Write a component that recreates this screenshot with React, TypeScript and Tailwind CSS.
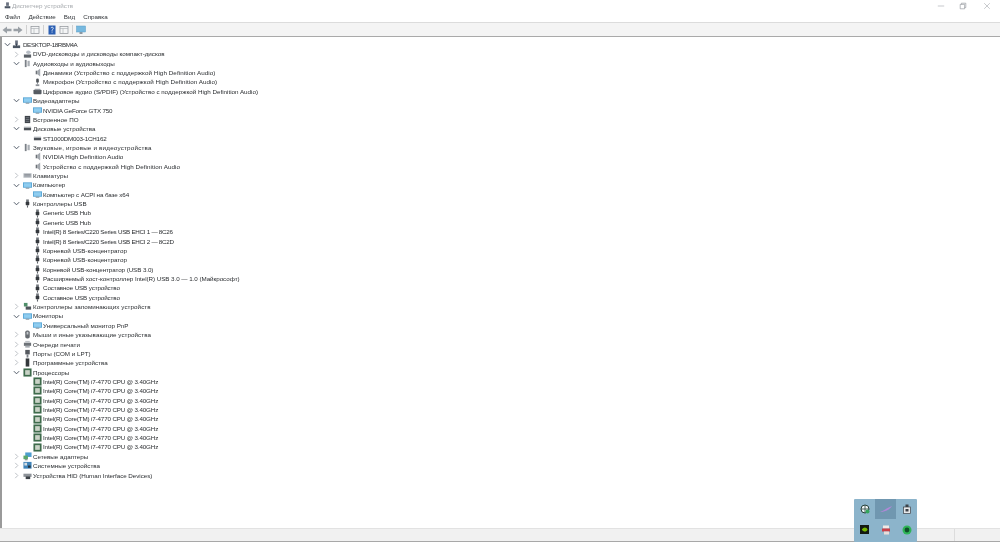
import React from "react";

type IconName = "pc" | "dvd" | "audio" | "speaker" | "mic" | "digital" | "monitor" | "chip" | "disk" | "keyboard" | "usb" | "storage" | "mouse" | "printer" | "port" | "soft" | "cpu" | "net" | "system" | "hid";

type Row = { level: 0 | 1 | 2; open?: boolean; closed?: boolean; icon: IconName; text: string; track?: string };

const CPU_NAME = "Intel(R) Core(TM) i7-4770 CPU @ 3.40GHz";

const rows: Row[] = [
  { level: 0, open: true, icon: "pc", text: "DESKTOP-18RBM4A", track: "tracking-[-0.4px]" },
  { level: 1, closed: true, icon: "dvd", text: "DVD-дисководы и дисководы компакт-дисков" },
  { level: 1, open: true, icon: "audio", text: "Аудиовходы и аудиовыходы" },
  { level: 2, icon: "speaker", text: "Динамики (Устройство с поддержкой High Definition Audio)", track: "tracking-[0.07px]" },
  { level: 2, icon: "mic", text: "Микрофон (Устройство с поддержкой High Definition Audio)", track: "tracking-[0.07px]" },
  { level: 2, icon: "digital", text: "Цифровое аудио (S/PDIF) (Устройство с поддержкой High Definition Audio)" },
  { level: 1, open: true, icon: "monitor", text: "Видеоадаптеры" },
  { level: 2, icon: "monitor", text: "NVIDIA GeForce GTX 750", track: "tracking-[-0.18px]" },
  { level: 1, closed: true, icon: "chip", text: "Встроенное ПО" },
  { level: 1, open: true, icon: "disk", text: "Дисковые устройства" },
  { level: 2, icon: "disk", text: "ST1000DM003-1CH162", track: "tracking-[-0.2px]" },
  { level: 1, open: true, icon: "audio", text: "Звуковые, игровые и видеоустройства", track: "tracking-[0.2px]" },
  { level: 2, icon: "speaker", text: "NVIDIA High Definition Audio" },
  { level: 2, icon: "speaker", text: "Устройство с поддержкой High Definition Audio", track: "tracking-[0.07px]" },
  { level: 1, closed: true, icon: "keyboard", text: "Клавиатуры" },
  { level: 1, open: true, icon: "monitor", text: "Компьютер" },
  { level: 2, icon: "monitor", text: "Компьютер с ACPI на базе x64", track: "tracking-[-0.1px]" },
  { level: 1, open: true, icon: "usb", text: "Контроллеры USB" },
  { level: 2, icon: "usb", text: "Generic USB Hub", track: "tracking-[-0.13px]" },
  { level: 2, icon: "usb", text: "Generic USB Hub", track: "tracking-[-0.13px]" },
  { level: 2, icon: "usb", text: "Intel(R) 8 Series/C220 Series USB EHCI 1 — 8C26", track: "tracking-[-0.27px]" },
  { level: 2, icon: "usb", text: "Intel(R) 8 Series/C220 Series USB EHCI 2 — 8C2D", track: "tracking-[-0.27px]" },
  { level: 2, icon: "usb", text: "Корневой USB-концентратор" },
  { level: 2, icon: "usb", text: "Корневой USB-концентратор" },
  { level: 2, icon: "usb", text: "Корневой USB-концентратор (USB 3.0)", track: "tracking-[-0.08px]" },
  { level: 2, icon: "usb", text: "Расширяемый хост-контроллер Intel(R) USB 3.0 — 1.0 (Майкрософт)", track: "tracking-[-0.05px]" },
  { level: 2, icon: "usb", text: "Составное USB устройство", track: "tracking-[-0.12px]" },
  { level: 2, icon: "usb", text: "Составное USB устройство", track: "tracking-[-0.12px]" },
  { level: 1, closed: true, icon: "storage", text: "Контроллеры запоминающих устройств", track: "tracking-[0.06px]" },
  { level: 1, open: true, icon: "monitor", text: "Мониторы" },
  { level: 2, icon: "monitor", text: "Универсальный монитор PnP" },
  { level: 1, closed: true, icon: "mouse", text: "Мыши и иные указывающие устройства", track: "tracking-[0.06px]" },
  { level: 1, closed: true, icon: "printer", text: "Очереди печати" },
  { level: 1, closed: true, icon: "port", text: "Порты (COM и LPT)" },
  { level: 1, closed: true, icon: "soft", text: "Программные устройства" },
  { level: 1, open: true, icon: "cpu", text: "Процессоры" },
  ...Array.from({ length: 8 }, () => ({ level: 2 as const, icon: "cpu" as const, text: CPU_NAME, track: "tracking-[-0.15px]" })),
  { level: 1, closed: true, icon: "net", text: "Сетевые адаптеры" },
  { level: 1, closed: true, icon: "system", text: "Системные устройства" },
  { level: 1, closed: true, icon: "hid", text: "Устройства HID (Human Interface Devices)", track: "tracking-[-0.05px]" },
];

function DeviceIcon({ name }: { name: IconName }) {
  const shapes: Record<IconName, React.ReactNode> = {
    pc: (
      <>
        <rect x="3.5" y="0.5" width="3" height="5" fill="#6b7280" />
        <rect x="1" y="6" width="8" height="3" fill="#4b5563" />
        <rect x="4.5" y="4" width="1" height="3" fill="#374151" />
      </>
    ),
    dvd: (
      <>
        <ellipse cx="6" cy="2.5" rx="2.5" ry="2" fill="#b8bec6" />
        <rect x="1" y="5" width="8" height="3.5" fill="#5b6168" />
      </>
    ),
    audio: (
      <>
        <rect x="2" y="1" width="2" height="8" fill="#7b8087" />
        <rect x="5" y="2" width="2.5" height="6" fill="#a9aeb4" />
      </>
    ),
    speaker: (
      <>
        <rect x="3" y="3" width="2" height="4" fill="#6d7278" />
        <path d="M5 3 8 0.5V9.5L5 7Z" fill="#a4a9af" />
      </>
    ),
    mic: (
      <>
        <rect x="3.5" y="0.5" width="3" height="5" rx="1.5" fill="#4f5459" />
        <rect x="3" y="7" width="4" height="2" fill="#8d9197" />
        <rect x="4.5" y="5" width="1" height="2" fill="#8d9197" />
      </>
    ),
    digital: (
      <>
        <rect x="0.5" y="3" width="9" height="5" rx="1" fill="#555b62" />
        <rect x="2" y="2" width="6" height="1.5" fill="#9aa0a7" />
      </>
    ),
    monitor: (
      <>
        <rect x="0" y="1.5" width="10" height="6" fill="#58a6d6" />
        <rect x="1" y="2.5" width="8" height="4" fill="#8fcdf0" />
        <rect x="3" y="7.5" width="4" height="1" fill="#7b8a96" />
      </>
    ),
    chip: (
      <>
        <rect x="2" y="1" width="6" height="8" fill="#3f444a" />
        <path d="M3 3h4M3 5h4M3 7h4" stroke="#9ba1a8" strokeWidth="0.6" />
      </>
    ),
    disk: (
      <>
        <rect x="1" y="4" width="8" height="3" fill="#4d5258" />
        <rect x="1" y="3" width="8" height="1" fill="#a7acb2" />
      </>
    ),
    keyboard: (
      <>
        <rect x="0.5" y="2.5" width="9" height="5" fill="#b5bac0" />
        <path d="M1.5 4h7M1.5 5.5h7" stroke="#73787e" strokeWidth="0.6" />
      </>
    ),
    usb: (
      <>
        <rect x="3.5" y="0.5" width="3" height="3" fill="#73787e" />
        <rect x="3" y="3" width="4" height="4" rx="1" fill="#34383d" />
        <rect x="4.4" y="7" width="1.2" height="2.5" fill="#5f6369" />
      </>
    ),
    storage: (
      <>
        <rect x="1" y="1" width="4" height="4" fill="#4f8f6a" />
        <rect x="3" y="5" width="6" height="3.5" fill="#50565c" />
      </>
    ),
    mouse: (
      <>
        <rect x="2.5" y="0.5" width="5" height="9" rx="2" fill="#666b71" />
        <rect x="4" y="2" width="2" height="3" fill="#c4c8cc" />
      </>
    ),
    printer: (
      <>
        <rect x="1" y="3" width="8" height="3.5" fill="#6d7278" />
        <rect x="2.5" y="1" width="5" height="2" fill="#bfc3c8" />
        <rect x="2.5" y="6.5" width="5" height="2" fill="#a9aeb4" />
      </>
    ),
    port: (
      <>
        <rect x="2.5" y="1" width="5" height="5" fill="#55595f" />
        <rect x="4" y="6" width="2" height="3.5" fill="#7b8087" />
      </>
    ),
    soft: <rect x="3" y="0.5" width="4" height="9" fill="#33373b" />,
    cpu: (
      <>
        <rect x="0.5" y="0.5" width="9" height="9" fill="#3f6b4c" />
        <rect x="2.4" y="2.4" width="5.2" height="5.2" fill="#c9d2c6" />
      </>
    ),
    net: (
      <>
        <rect x="2.5" y="0.5" width="7" height="5" fill="#4e9ed0" />
        <rect x="0.5" y="4" width="5" height="4" fill="#5ba86c" />
        <rect x="2" y="8" width="3" height="1.2" fill="#7b8087" />
      </>
    ),
    system: (
      <>
        <rect x="0.5" y="1" width="9" height="7.5" fill="#3f83b8" />
        <rect x="1.5" y="2" width="3" height="3" fill="#d5dde3" />
        <rect x="5.5" y="5" width="3" height="2.5" fill="#26343f" />
      </>
    ),
    hid: (
      <>
        <rect x="0.5" y="3" width="9" height="3.5" fill="#8d9298" />
        <rect x="3" y="6" width="5" height="3" fill="#3c4147" />
      </>
    ),
  };
  return (
    <svg viewBox="0 0 10 10" className="h-[9px] w-[9px] shrink-0">
      {shapes[name]}
    </svg>
  );
}

function Expander({ open, closed }: { open?: boolean; closed?: boolean }) {
  return (
    <svg viewBox="0 0 8 8" className="h-[7px] w-[7px] shrink-0">
      {open && <path d="M1 2.5 4 5.5 7 2.5" fill="none" stroke="#4b5563" strokeWidth="1.1" />}
      {closed && <path d="M2.5 1 5.5 4 2.5 7" fill="none" stroke="#b3b8bd" strokeWidth="1" />}
    </svg>
  );
}

function TreeRow({ row }: { row: Row }) {
  const indent = row.level === 0 ? "pl-[1.5px]" : row.level === 1 ? "pl-[10.5px]" : "pl-[20.5px]";
  return (
    <div className={`flex h-[9.37px] items-center ${indent}`}>
      {row.level < 2 ? <Expander open={row.open} closed={row.closed} /> : <span className="w-[7px] shrink-0" />}
      <span className={row.level === 0 ? "ml-[1.5px] flex w-[9px]" : "ml-[3.5px] flex w-[9px]"}>
        <DeviceIcon name={row.icon} />
      </span>
      <span className={`${row.level === 0 ? "ml-[2px]" : "ml-[1px]"} whitespace-nowrap ${row.track ?? ""}`}>{row.text}</span>
    </div>
  );
}

function ToolbarIcon({ kind }: { kind: "back" | "forward" | "panel" | "help" | "monitor" }) {
  return (
    <svg viewBox="0 0 10 10" className="h-[10px] w-[10px]">
      {kind === "back" && <path d="M0.5 5 5 1.5V3.7H9.5V6.3H5V8.5Z" fill="#9aa0a6" />}
      {kind === "forward" && <path d="M9.5 5 5 1.5V3.7H0.5V6.3H5V8.5Z" fill="#9aa0a6" />}
      {kind === "panel" && (
        <>
          <rect x="1" y="1.5" width="8" height="7" fill="#f4f5f6" stroke="#8d9298" strokeWidth="0.7" />
          <path d="M1 3.5H9M4 3.5V8.5" stroke="#a6abb0" strokeWidth="0.6" />
        </>
      )}
      {kind === "help" && (
        <>
          <rect x="1.5" y="0.5" width="7" height="9" fill="#2b5fb3" />
          <path d="M4 3.2c0-1.4 2.3-1.4 2.3 0C6.3 4.4 5 4.4 5 5.8" fill="none" stroke="#fff" strokeWidth="0.8" />
          <rect x="4.6" y="6.6" width="0.9" height="0.9" fill="#fff" />
        </>
      )}
      {kind === "monitor" && (
        <>
          <rect x="0.5" y="1" width="9" height="6" fill="#77b9df" stroke="#5a9cc4" strokeWidth="0.5" />
          <rect x="3.5" y="7" width="3" height="2" fill="#8b98a3" />
        </>
      )}
    </svg>
  );
}

export default function App() {
  return (
    <div className="relative flex h-[542px] w-[1000px] flex-col overflow-hidden bg-white font-['Liberation_Sans',sans-serif] text-[6.25px] text-[#2a2d30] blur-[0.3px]">
      <div className="flex h-[11px] shrink-0 items-center pl-[4px]">
        <svg viewBox="0 0 10 10" className="h-[7px] w-[7px]">
          <rect x="3" y="0.5" width="4" height="5" fill="#6b7280" />
          <rect x="1" y="6" width="8" height="3" fill="#4b5563" />
        </svg>
        <span className="ml-[1px] text-[#a6aaae]">Диспетчер устройств</span>
        <div className="ml-auto flex">
          <svg viewBox="0 0 10 10" className="mr-[14px] h-[8px] w-[8px]">
            <path d="M1 5H9" stroke="#a8acb0" strokeWidth="0.8" />
          </svg>
          <svg viewBox="0 0 10 10" className="mr-[16px] h-[8px] w-[8px]">
            <path d="M1.5 3H7V8.5H1.5ZM3 3V1.5H8.5V7H7" fill="none" stroke="#8f9398" strokeWidth="0.8" />
          </svg>
          <svg viewBox="0 0 10 10" className="mr-[9px] h-[8px] w-[8px]">
            <path d="M1.5 1.5 8.5 8.5M8.5 1.5 1.5 8.5" stroke="#a8acb0" strokeWidth="0.8" />
          </svg>
        </div>
      </div>
      <div className="flex h-[12px] shrink-0 items-center gap-[8px] border-b border-[#dcdcdc] pl-[5px] pt-[1px] text-[#33363a]">
        <span>Файл</span>
        <span>Действие</span>
        <span>Вид</span>
        <span>Справка</span>
      </div>
      <div className="flex h-[14px] shrink-0 items-center border-b border-[#a9a9a9] bg-[#f4f4f4] pl-[2px]">
        <ToolbarIcon kind="back" />
        <span className="w-[1px]" />
        <ToolbarIcon kind="forward" />
        <span className="mx-[3px] h-[9px] w-px bg-[#d0d0d0]" />
        <ToolbarIcon kind="panel" />
        <span className="mx-[3px] h-[9px] w-px bg-[#d0d0d0]" />
        <ToolbarIcon kind="help" />
        <span className="w-[2px]" />
        <ToolbarIcon kind="panel" />
        <span className="mx-[3px] h-[9px] w-px bg-[#d0d0d0]" />
        <ToolbarIcon kind="monitor" />
      </div>
      <div className="min-h-0 flex-1 border-l-2 border-[#9a9a9a] pt-[3px]">
        {rows.map((row, i) => (
          <TreeRow key={i} row={row} />
        ))}
      </div>
      <div className="flex h-[14px] shrink-0 border-t border-b border-[#e2e2e2] border-b-[#a8a8a8] bg-[#f1f1f1]">
        <div className="w-[955px] border-r border-[#dcdcdc]" />
        <div className="flex-1" />
      </div>
      <div className="absolute left-[854px] top-[499px] grid h-[43px] w-[63px] grid-cols-3 grid-rows-[20px_23px] rounded-[1px] bg-[#8cb4cb]">
        <div className="flex items-center justify-center">
          <svg viewBox="0 0 10 10" className="h-[10px] w-[10px]">
            <circle cx="5" cy="5" r="4" fill="#f2f6f6" stroke="#27413a" strokeWidth="1" />
            <path d="M1 5H9M5 1V9" stroke="#27413a" strokeWidth="0.8" />
            <circle cx="7.5" cy="7.5" r="2" fill="#34a65c" />
          </svg>
        </div>
        <div className="flex items-center justify-center bg-[#7097b0]">
          <svg viewBox="0 0 14 8" className="h-[8px] w-[14px]">
            <path d="M1 7C4 6 8 3 13 1 11 4 7 7 1 7Z" fill="#b088d8" />
          </svg>
        </div>
        <div className="flex items-center justify-center">
          <svg viewBox="0 0 8 10" className="h-[10px] w-[8px]">
            <rect x="2.5" y="0.5" width="3" height="3" fill="#3c4147" />
            <rect x="0.5" y="3" width="7" height="6.5" fill="#e6e8ea" stroke="#3c4147" strokeWidth="0.7" />
            <rect x="2.5" y="5" width="3" height="2.5" fill="#3c4147" />
          </svg>
        </div>
        <div className="flex items-center justify-center pb-[2px]">
          <svg viewBox="0 0 10 10" className="h-[9px] w-[9px]">
            <rect width="10" height="10" fill="#141a12" />
            <path d="M2 5C4 2 7 2 8.5 5 7 8 4 8 2 5Z" fill="#76b900" />
          </svg>
        </div>
        <div className="flex items-center justify-center pb-[2px]">
          <svg viewBox="0 0 10 10" className="h-[10px] w-[10px]">
            <rect x="2" y="0.5" width="6" height="3" fill="#f1e9e6" />
            <rect x="1" y="3.5" width="8" height="3" fill="#c9414a" />
            <rect x="3" y="6.5" width="5" height="3" fill="#e9dcd8" />
          </svg>
        </div>
        <div className="flex items-center justify-center pb-[2px]">
          <svg viewBox="0 0 10 10" className="h-[10px] w-[10px]">
            <circle cx="5" cy="5" r="4.5" fill="#2fb457" />
            <circle cx="5" cy="5" r="2.4" fill="#0f4f2a" />
          </svg>
        </div>
      </div>
    </div>
  );
}
